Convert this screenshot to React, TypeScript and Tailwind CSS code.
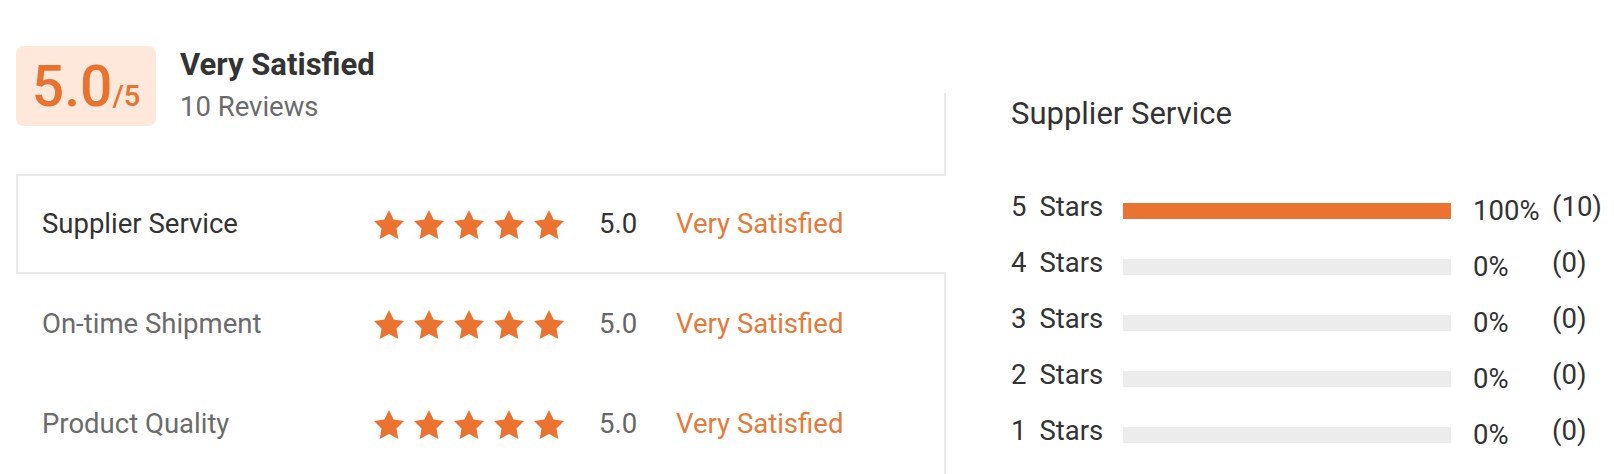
import React from "react";

const Star = () => (
  <svg width="30" height="29" viewBox="2 2 20 19.02" preserveAspectRatio="none">
    <polygon
      points="12,2 15.09,8.26 22,9.27 17,14.14 18.18,21.02 12,17.77 5.82,21.02 7,14.14 2,9.27 8.91,8.26"
      fill="#ec732f"
    />
  </svg>
);

const rows = [
  { label: "Supplier Service", active: true },
  { label: "On-time Shipment", active: false },
  { label: "Product Quality", active: false },
];

const dist = [
  { n: 5, pct: 100, count: 10 },
  { n: 4, pct: 0, count: 0 },
  { n: 3, pct: 0, count: 0 },
  { n: 2, pct: 0, count: 0 },
  { n: 1, pct: 0, count: 0 },
];

export default function App() {
  return (
    <div
      className="w-[1614px] h-[474px] bg-white flex overflow-hidden"
      style={{ fontFamily: "Roboto, 'Noto Sans', Arial, sans-serif" }}
    >
      {/* Left column */}
      <div className="ml-[16px] w-[930px] mt-[93px] border-r-2 border-[#e9e9e9] flex flex-col shrink-0">
        {/* Header */}
        <div className="-mt-[47px] h-[80px] flex items-center">
          <div className="w-[140px] h-[80px] rounded-[8px] bg-[#fde8db] flex items-center justify-center">
            <div className="flex items-baseline text-[#e8732e] leading-none font-medium">
              <span className="text-[57px]">5.0</span>
              <span className="text-[29px]">/5</span>
            </div>
          </div>
          <div className="ml-[24px] flex flex-col gap-[6px]">
            <div className="text-[31px] leading-[36px] font-bold text-[#333333]">Very Satisfied</div>
            <div className="text-[27.5px] leading-[36px] text-[#6b6b6b]">10 Reviews</div>
          </div>
        </div>

        {/* Tabs */}
        <div className="mt-[48px] flex flex-col">
          {rows.map((r) => (
            <div
              key={r.label}
              className={
                r.active
                  ? "h-[100px] -mr-[2px] bg-white border-l-2 border-y-2 border-[#e9e9e9] flex items-center pl-[24px]"
                  : "h-[100px] border-l-2 border-y-2 border-transparent flex items-center pl-[24px]"
              }
            >
              <div
                className={
                  r.active
                    ? "w-[332px] text-[27.5px] text-[#333333]"
                    : "w-[332px] text-[27.5px] text-[#6b6b6b]"
                }
              >
                {r.label}
              </div>
              <div className="flex gap-[10px] w-[225px]">
                <Star />
                <Star />
                <Star />
                <Star />
                <Star />
              </div>
              <div
                className={
                  r.active
                    ? "w-[77px] text-[27.5px] text-[#333333]"
                    : "w-[77px] text-[27.5px] text-[#666666]"
                }
              >
                5.0
              </div>
              <div className="text-[27.5px] text-[#e57a3a]">Very Satisfied</div>
            </div>
          ))}
        </div>
      </div>

      {/* Right panel */}
      <div className="flex-1 pl-[65px] pt-[96px] flex flex-col">
        <div className="text-[31px] leading-[36px] text-[#333333]">Supplier Service</div>
        <div className="mt-[51px] flex flex-col">
          {dist.map((d) => (
            <div key={d.n} className="h-[56px] flex items-center text-[27.5px] text-[#333333]">
              <div className="w-[112px] flex gap-[13px] mb-[8px] leading-[32px]">
                <span>{d.n}</span>
                <span>Stars</span>
              </div>
              <div className="w-[328px] h-[16px] bg-[#ececec]">
                <div className="h-full bg-[#eb7331]" style={{ width: `${d.pct}%` }} />
              </div>
              <div className="ml-[22px] w-[79px] leading-[32px]">{d.pct}%</div>
              <div className="mb-[8px] leading-[32px]">({d.count})</div>
            </div>
          ))}
        </div>
      </div>
    </div>
  );
}
